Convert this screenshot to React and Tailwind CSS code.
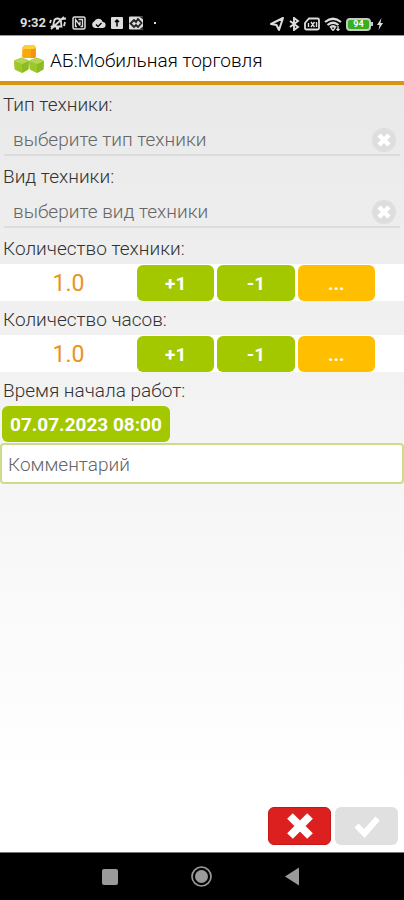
import React, { useState } from 'react';

const Cube = ({ x, y, top, left, right }) => (
    <g transform={`translate(${x} ${y})`}>
        <path d="M1 3 7.500 0.500 14 3Q15 3.500 15 5L14.500 11.500Q14.500 12.500 13.500 13L8 16 1.500 13Q0.500 12.500 0.500 11.500L0 5Q0 3.500 1 3Z" fill={left} />
        <path d="M14.800 4 8 7V16L13.500 13Q14.500 12.500 14.500 11.500Z" fill={right} />
        <path d="M0.500 4 7.500 0.500 14.500 4 8 7Z" fill={top} />
    </g>
);

const Logo = () => (
    <svg viewBox="0 0 30 28" className="w-[30px] h-7 shrink-0" aria-hidden="true">
        <g>
            <path d="M8.500 2.500 10.500 0H20L21.500 2 22 11.500 20.500 13H9.500L8 11.500Z" fill="#fba80f" />
            <path d="M8.500 2.500 10.500 0H20L21.500 2 20.500 4H9Z" fill="#ffd035" />
            <path d="M17 4H20.500L21.500 2 22 11.500 20.500 13H17Z" fill="#f59310" />
        </g>
        <Cube x={0} y={12} top="#b5d653" left="#9cc82c" right="#8dbb25" />
        <Cube x={15} y={12} top="#b5d653" left="#9cc82c" right="#8dbb25" />
    </svg>
);

const StatusBar = () => (
    <div className="h-[35px] bg-black text-[#dddddd] flex items-end justify-between pl-5 pr-[21px] pb-1 shrink-0">
        <div className="flex items-center">
            <span className="text-[13px] leading-4 font-bold w-[29px]">9:32</span>
            {/* muted bell */}
            <svg viewBox="0 0 18 14" className="w-[18px] h-[14px]" fill="none" stroke="currentColor" strokeWidth="1.8">
                <path d="M4 10.500h8.500L12 5.500Q11.500 2.500 8.500 2.500 5.500 2.500 5 5.500ZM7 12.500h3M2 13 15 1M1 7l1-3M15 10l1-4M2 10l1 1M13 3l4-.5" />
            </svg>
            {/* nfc */}
            <svg viewBox="0 0 14 14" className="w-[14px] h-[14px] ml-[5px]" fill="none" stroke="currentColor">
                <rect x="1" y="1" width="12" height="12" rx="1.500" strokeWidth="1.500" />
                <path d="M5 10.500H3.500v-7L8 9.500M6.500 3.500h4v7H8.500M8 9V5.500" strokeWidth="1.300" />
            </svg>
            {/* cloud */}
            <svg viewBox="0 0 15 14" className="w-[15px] h-[14px] ml-[5px]">
                <path d="M4 12A3.500 3.500 0 0 1 3.300 5.300 4.500 4.500 0 0 1 11.700 6 3 3 0 0 1 11.500 12Z" fill="currentColor" />
                <path d="m5 8.500 2 2 3.500-3.500" fill="none" stroke="#000" strokeWidth="1.300" />
            </svg>
            {/* upload */}
            <svg viewBox="0 0 12 14" className="w-3 h-[14px] ml-[5px]">
                <rect y="1" width="12" height="12" rx="1" fill="currentColor" />
                <path d="M6 10.500V4M4 6 6 4l2 2" fill="none" stroke="#000" strokeWidth="1.500" />
            </svg>
            {/* sync */}
            <svg viewBox="0 0 14 14" className="w-[14px] h-[14px] ml-[6px]">
                <rect y="0.500" width="14" height="13" rx="1" fill="currentColor" />
                <path d="M1.500 7.500 5 4 7 6 9 3l3.500 4L9 11 7 9l-2 2Z" fill="none" stroke="#222" strokeWidth="1.800" />
                <path d="M10 .5h4v3ZM10 13.500l4-3v3Z" fill="#333" />
            </svg>
            <span className="w-[2px] h-[2px] bg-current ml-[11px]" />
        </div>
        <div className="flex items-center">
            {/* location */}
            <svg viewBox="0 0 14 14" className="w-[14px] h-[14px]" fill="none" stroke="currentColor" strokeWidth="2" strokeLinejoin="round">
                <path d="M13 1 1 7l5.500 1L9 13Z" />
            </svg>
            {/* bluetooth */}
            <svg viewBox="0 0 12 14" className="w-3 h-[14px] ml-1" fill="none" stroke="currentColor" strokeWidth="1.900">
                <path d="m2 4 8 6-4 3V1l4 3-8 6" />
            </svg>
            {/* sim card */}
            <svg viewBox="0 0 16 14" className="w-4 h-[14px] ml-1" fill="none" stroke="currentColor">
                <path d="M5 1.500h8.500q1.500 0 1.500 1.500v8q0 1.500-1.500 1.500h-11Q1 12.500 1 11V6Z" strokeWidth="1.800" />
                <path d="m7 5 3.500 5M10.500 5 7 10M4.500 6v4M12.500 5v5" strokeWidth="1.400" />
            </svg>
            {/* wifi */}
            <svg viewBox="0 0 18 14" className="w-[18px] h-[14px] ml-1" fill="none" stroke="currentColor" strokeWidth="2.200">
                <path d="M1 5Q9-1.500 17 5M3.500 8Q9 3.500 14.500 8M6 10.500Q9 8 12 10.500" />
                <path d="m7 11 2 2.500 2-2.500M14 9v4.500M12.500 12l1.500 1.500 1.500-1.500" strokeWidth="1.300" />
            </svg>
            <span className="flex items-center ml-1">
                <span className="w-[25px] h-[13px] rounded border-2 border-[#c8c8c8] bg-[#36b01c] text-white text-[9px] leading-[9px] font-bold text-center">94</span>
                <span className="w-[2px] h-1 bg-[#c8c8c8]" />
            </span>
            <svg viewBox="0 0 6 12" className="w-[6px] h-3 ml-1" fill="currentColor">
                <path d="M4.500 0 0 7h2.500L1.500 12 6 5H3.500Z" />
            </svg>
        </div>
    </div>
);

const PickerField = ({ id, label, placeholder }) => {
    const [value, setValue] = useState('');
    return (
        <div>
            <label htmlFor={id} className="block h-9 pt-px px-[3px] text-[19px] leading-9 font-light text-[#333333]">{label}</label>
            <div className="h-9 px-1 flex flex-col">
                <div className="h-[34px] flex items-center border-b-2 border-[#dcdcdc]">
                    <input
                        id={id}
                        value={value}
                        onChange={(e) => setValue(e.target.value)}
                        placeholder={placeholder}
                        className="flex-1 min-w-0 h-8 pl-[9px] pt-[2px] text-[19px] font-light text-[#333333] placeholder:text-[#666666] bg-transparent outline-none"
                    />
                    <button type="button" aria-label="Очистить" onClick={() => setValue('')} className="mt-[3px] mr-1">
                        <svg viewBox="0 0 24 24" className="w-6 h-6">
                            <circle cx="12" cy="12" r="12" fill="#dedede" />
                            <path d="m7 7 10 10M17 7 7 17" stroke="#fff" strokeWidth="4.500" />
                        </svg>
                    </button>
                </div>
            </div>
        </div>
    );
};

const CounterField = ({ id, label }) => {
    const [count, setCount] = useState(1);
    const btnClass = "flex-1 h-9 pt-px rounded-md text-white text-[19px] leading-9 font-bold";
    return (
        <div>
            <label htmlFor={id} className="block h-[34px] pt-1 px-[3px] text-[19px] leading-[30px] font-light text-[#333333]">{label}</label>
            <div className="h-[37px] bg-white flex items-center pr-[29px]">
                <output id={id} className="w-[137px] pt-1 text-center text-[23px] text-[#e8951c]">{count.toFixed(1)}</output>
                <div className="flex-1 flex gap-[3px] pt-px">
                    <button type="button" className={`${btnClass} bg-[#a4c800]`} onClick={() => setCount(count + 1)}>+1</button>
                    <button type="button" className={`${btnClass} bg-[#a4c800]`} onClick={() => setCount(count - 1)}>-1</button>
                    <button type="button" className={`${btnClass} bg-[#ffbf00]`}>...</button>
                </div>
            </div>
        </div>
    );
};

const App = () => {
    const [comment, setComment] = useState('');

    return (
        <div className="min-h-screen flex flex-col font-['Roboto',sans-serif]">
            <StatusBar />

            <header className="h-[50px] bg-white border-t border-[#999999] border-b-4 border-b-[#d8950f] flex items-center pl-[14px] shrink-0">
                <Logo />
                <h1 className="ml-[6px] pt-1 text-[19px] leading-6 font-light text-black">АБ:Мобильная торговля</h1>
            </header>

            <main className="flex-1 flex flex-col pt-px bg-linear-to-b from-[#e9e9e9] to-white to-90%">
                <PickerField id="type" label="Тип техники:" placeholder="выберите тип техники" />
                <PickerField id="kind" label="Вид техники:" placeholder="выберите вид техники" />
                <CounterField id="units" label="Количество техники:" />
                <CounterField id="hours" label="Количество часов:" />

                <label htmlFor="start" className="block h-[34px] pt-1 px-[3px] text-[19px] leading-[30px] font-light text-[#333333]">Время начала работ:</label>
                <button id="start" type="button" className="self-start h-9 ml-[2px] px-2 pt-px rounded-md bg-[#a4c800] text-white text-[19px] leading-9 font-bold">07.07.2023 08:00</button>
                <input
                    aria-label="Комментарий"
                    value={comment}
                    onChange={(e) => setComment(e.target.value)}
                    placeholder="Комментарий"
                    className="mt-px w-full h-[41px] px-[6px] pt-px rounded-sm border-2 border-[#cbdd8a] bg-white text-[19px] font-light text-[#333333] placeholder:text-[#666666] outline-none"
                />

                {/* Actions */}
                <div className="mt-auto flex justify-end gap-1 pr-[6px] pb-[7px]">
                    <button type="button" aria-label="Отмена" className="w-[63px] h-[38px] rounded-md bg-[#dc1f1f] border border-[#c41818] flex items-center justify-center">
                        <svg viewBox="0 0 28 28" className="w-7 h-7">
                            <path d="m4 4 20 20M24 4 4 24" stroke="#fff" strokeWidth="8" />
                        </svg>
                    </button>
                    <button type="button" aria-label="Готово" className="w-[63px] h-[38px] rounded-md bg-[#e0e0e0] flex items-center justify-center">
                        <svg viewBox="0 0 28 24" className="w-7 h-6" fill="none">
                            <path d="m3.500 11.500 8 8L24.500 4.500" stroke="#fff" strokeWidth="6" />
                        </svg>
                    </button>
                </div>
            </main>

            <nav className="h-12 bg-black border-t border-[#777777] flex items-center justify-center gap-[70px] shrink-0">
                <button type="button" aria-label="Недавние" className="w-[22px] flex justify-center">
                    <span className="w-4 h-4 rounded-xs bg-[#9a9a9a]" />
                </button>
                <button type="button" aria-label="Домой">
                    <svg viewBox="0 0 22 22" className="w-[22px] h-[22px]">
                        <circle cx="10.500" cy="10.500" r="9.500" fill="none" stroke="#9a9a9a" strokeWidth="1.700" />
                        <circle cx="10.500" cy="10.500" r="6.500" fill="#9a9a9a" />
                    </svg>
                </button>
                <button type="button" aria-label="Назад">
                    <svg viewBox="0 0 22 22" className="w-[22px] h-[22px]">
                        <path d="M2 10.500 16 1.500v18Z" fill="#9a9a9a" />
                    </svg>
                </button>
            </nav>
        </div>
    );
};

export default App;
